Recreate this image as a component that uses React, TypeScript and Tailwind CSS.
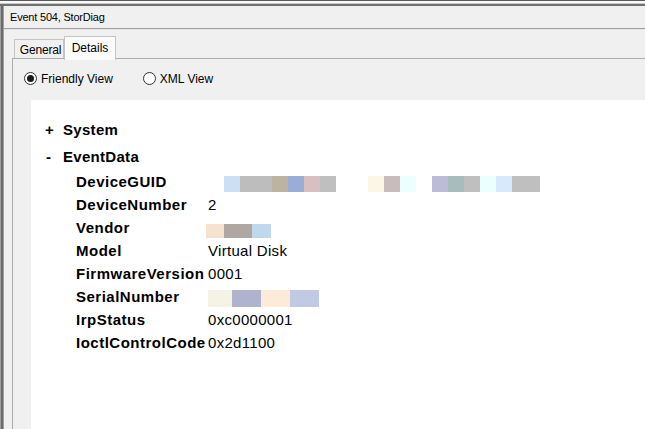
import React from 'react';

type Block = { w: number; c: string };

interface Field {
  label: string;
  value?: string;
  blocks?: Block[];
  blockClass?: string;
}

// redacted values are drawn as colour squares, like the screenshot
const guidBlocks: Block[] = [
  { w: 16, c: '#c9e0f5' },
  { w: 32, c: '#bdbdbd' },
  { w: 16, c: '#bdb3a0' },
  { w: 16, c: '#9aacd8' },
  { w: 16, c: '#d9bfbf' },
  { w: 16, c: '#bfbfbf' },
  { w: 32, c: '#ffffff' },
  { w: 16, c: '#fdf5e6' },
  { w: 16, c: '#c9bcbc' },
  { w: 16, c: '#ecffff' },
  { w: 16, c: '#ffffff' },
  { w: 16, c: '#bdbcd8' },
  { w: 16, c: '#a9bcbc' },
  { w: 16, c: '#bfbfbf' },
  { w: 16, c: '#ecffff' },
  { w: 16, c: '#d8e9fd' },
  { w: 28, c: '#bfbfbf' },
];

const vendorBlocks: Block[] = [
  { w: 18, c: '#f5e3d0' },
  { w: 28, c: '#b0a6a2' },
  { w: 19, c: '#c0d8ee' },
];

const serialBlocks: Block[] = [
  { w: 24, c: '#f5f3e3' },
  { w: 29, c: '#b0b3cd' },
  { w: 29, c: '#fdebd9' },
  { w: 29, c: '#c0cbe3' },
];

const fields: Field[] = [
  { label: 'DeviceGUID', blocks: guidBlocks, blockClass: 'mt-[6px] ml-[16px] h-[16px]' },
  { label: 'DeviceNumber', value: '2' },
  { label: 'Vendor', blocks: vendorBlocks, blockClass: 'mt-[8px] -ml-[2px] h-[14px]' },
  { label: 'Model', value: 'Virtual Disk' },
  { label: 'FirmwareVersion', value: '0001' },
  { label: 'SerialNumber', blocks: serialBlocks, blockClass: 'mt-[5px] h-[17px]' },
  { label: 'IrpStatus', value: '0xc0000001' },
  { label: 'IoctlControlCode', value: '0x2d1100' },
];

function Radio({ checked, label }: { checked?: boolean; label: string }) {
  return (
    <label className="flex items-center gap-[4px]">
      <span className="w-[13px] h-[13px] rounded-full border border-[#333333] bg-white flex items-center justify-center">
        {checked && <span className="w-[7px] h-[7px] rounded-full bg-[#1a1a1a]" />}
      </span>
      <span className="text-[12px] text-black">{label}</span>
    </label>
  );
}

export default function App() {
  return (
    <div
      className="w-[645px] h-[429px] overflow-hidden bg-[#f0f0f0] flex flex-col text-black"
      style={{ fontFamily: '"Liberation Sans", Arial, sans-serif' }}
    >
      {/* window frame top */}
      <div className="h-px bg-[#5a5a5a]" />
      <div className="h-[2px] bg-[#fafafa]" />
      <div className="h-px bg-[#c8c8c8]" />
      <div className="h-[2px] bg-[#707070]" />

      <div className="flex-1 flex min-h-0">
        <div className="w-px bg-[#a0a0a0]" />
        <div className="w-[2px] bg-[#6a6a6a]" />
        <div className="w-px bg-[#a0a0a0]" />

        <div className="flex-1 flex flex-col min-w-0">
          <div className="h-[22px] flex items-center pl-[6px] text-[11px] tracking-[-0.2px]">
            Event 504, StorDiag
          </div>
          <div className="h-px bg-[#a0a0a0]" />
          <div className="h-px bg-[#e3e3e3]" />

          <div className="flex-1 flex flex-col pl-[8px] min-h-0">
            {/* tabs */}
            <div className="h-[28px] flex items-end pl-[2px]">
              <div className="w-[50px] h-[19px] border border-b-0 border-[#c4c4c4] bg-[#f0f0f0] flex items-center justify-center text-[12px] pt-[1px] pl-[3px] tracking-[-0.2px]">
                General
              </div>
              <div className="relative z-10 -mb-[2px] w-[52px] h-[24px] border border-b-0 border-[#c4c4c4] bg-[#fbfbfb] flex items-start justify-center pt-[2px] text-[12px]">
                Details
              </div>
            </div>

            <div className="flex-1 flex flex-col border-t border-l border-[#adadad] min-h-0">
              <div className="h-[41px] flex items-center gap-[30px] pl-[11px] pb-[2px]">
                <Radio checked label="Friendly View" />
                <Radio label="XML View" />
              </div>

              <div className="flex-1 ml-[18px] bg-white pt-[18px]">
                <div className="flex h-[24px] items-center text-[15px] font-bold tracking-[0.3px]">
                  <span className="w-[32px] pl-[14px]">+</span>
                  <span>System</span>
                </div>
                <div className="flex h-[24px] mt-[3px] items-center text-[15px] font-bold tracking-[0.3px]">
                  <span className="w-[32px] pl-[15px]">-</span>
                  <span>EventData</span>
                </div>
                <div className="mt-px">
                  {fields.map((f) => (
                    <div key={f.label} className="flex h-[23px] items-start text-[15px] leading-[23px]">
                      <span className="w-[177px] pl-[45px] font-bold whitespace-nowrap tracking-[0.5px]">
                        {f.label}
                      </span>
                      {f.blocks ? (
                        <div className={`flex ${f.blockClass}`}>
                          {f.blocks.map((b, i) => (
                            <span key={i} className="h-full" style={{ width: b.w, background: b.c }} />
                          ))}
                        </div>
                      ) : (
                        <span className="tracking-[0.3px]">{f.value}</span>
                      )}
                    </div>
                  ))}
                </div>
              </div>
            </div>
          </div>
        </div>
      </div>
    </div>
  );
}
